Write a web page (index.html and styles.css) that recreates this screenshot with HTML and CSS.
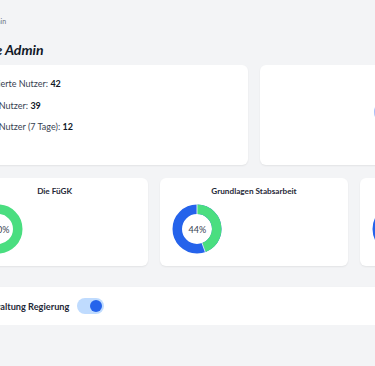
FILE: index.html
```html
<!DOCTYPE html>
<html lang="de">
  <head>
    <meta charset="UTF-8" />
    <meta name="viewport" content="width=device-width, initial-scale=1.0" />
    <title>Admin</title>
    <link rel="stylesheet" href="styles.css">
  </head>
  <body>
    <div class="page">
      <div class="breadcrumb">Home / Admin</div>
      <h1>Seite Admin</h1>

      <div class="row row-two">
        <div class="card stats">
          <p>Registrierte Nutzer: <b>42</b></p>
          <p>Aktive Nutzer: <b>39</b></p>
          <p>Aktive Nutzer (7 Tage): <b>12</b></p>
        </div>
        <div class="card chart-card">
          <svg class="donut big" viewBox="0 0 50 50">
            <circle cx="25" cy="25" r="19.75" class="ring-blue" />
            <circle cx="25" cy="25" r="19.75" class="ring-green"
              stroke-dasharray="61 124.1" transform="rotate(-90 25 25)" />
          </svg>
        </div>
      </div>

      <div class="row row-three">
        <div class="card course">
          <h3>Die FüGK</h3>
          <div class="donut-wrap">
            <svg class="donut" viewBox="0 0 50 50">
              <circle cx="25" cy="25" r="19.75" class="ring-green" />
            </svg>
            <span>100%</span>
          </div>
        </div>
        <div class="card course">
          <h3>Grundlagen Stabsarbeit</h3>
          <div class="donut-wrap">
            <svg class="donut" viewBox="0 0 50 50">
              <circle cx="25" cy="25" r="19.75" class="ring-blue" />
              <circle cx="25" cy="25" r="19.75" class="ring-green"
                stroke-dasharray="54.6 124.1" transform="rotate(-90 25 25)" />
              <line x1="25" y1="0" x2="25" y2="12" class="sep" />
              <line x1="25" y1="25" x2="33.4" y2="48.5" class="sep" />
            </svg>
            <span>44%</span>
          </div>
        </div>
        <div class="card course">
          <h3>Führung im Einsatz</h3>
          <div class="donut-wrap">
            <svg class="donut" viewBox="0 0 50 50">
              <circle cx="25" cy="25" r="19.75" class="ring-blue" />
              <circle cx="25" cy="25" r="19.75" class="ring-green"
                stroke-dasharray="37 124.1" transform="rotate(-90 25 25)" />
            </svg>
            <span>30%</span>
          </div>
        </div>
      </div>

      <div class="card setting">
        <span>Verwaltung Regierung</span>
        <label class="toggle">
          <input type="checkbox" checked />
          <span class="track"><span class="knob"></span></span>
        </label>
      </div>
    </div>
  </body>
</html>
```

FILE: styles.css
```css
body {
  font-family: Lato, "Noto Sans", sans-serif;
  background-color: #f3f4f6;
  color: #1f2937;
  margin: 0;
  padding: 0;
  overflow: hidden;
}
.page {
  width: 586px;
  margin-left: -39px;
  padding-top: 17px;
}
.breadcrumb {
  font-size: 7px;
  color: #6b7280;
  line-height: 9px;
}
h1 {
  font-size: 14px;
  font-style: italic;
  font-weight: 700;
  color: #111827;
  margin: 15px 0 6px 12px;
  line-height: 18px;
}
.row {
  display: grid;
  gap: 12px;
  margin-bottom: 13px;
}
.row-two {
  grid-template-columns: 1fr 1fr;
}
.row-three {
  grid-template-columns: 1fr 1fr 1fr;
  margin-bottom: 21px;
}
.card {
  background: white;
  border-radius: 6px;
  box-shadow: 0 1px 2px rgba(0, 0, 0, 0.07);
}
.stats {
  height: 100px;
  box-sizing: border-box;
  padding: 8px 10px;
}
.stats p {
  font-size: 9px;
  margin: 0;
  line-height: 21.5px;
  color: #374151;
}
.stats b {
  color: #111827;
}
.chart-card {
  height: 100px;
  display: flex;
  justify-content: center;
  align-items: center;
  padding-bottom: 7px;
  box-sizing: border-box;
}
.course {
  height: 88px;
  box-sizing: border-box;
  padding: 7px 12px;
}
.course h3 {
  font-size: 8.2px;
  font-weight: 700;
  text-align: center;
  margin: 0 0 6px;
  line-height: 13px;
  color: #1f2937;
}
.donut-wrap {
  position: relative;
  width: 50px;
  height: 50px;
}
.donut-wrap span {
  position: absolute;
  inset: 0;
  display: flex;
  align-items: center;
  justify-content: center;
  font-size: 9px;
  color: #374151;
}
.donut {
  width: 50px;
  height: 50px;
  display: block;
}
.donut.big {
  width: 60px;
  height: 60px;
}
.donut circle {
  fill: none;
  stroke-width: 9.5;
}
.ring-green {
  stroke: #4ade80;
}
.ring-blue {
  stroke: #2563eb;
}
.sep {
  stroke: white;
  stroke-width: 0.8;
}
.setting {
  height: 38px;
  border-radius: 0;
  display: flex;
  align-items: center;
  gap: 8px;
  padding: 0 18px;
  font-size: 9.2px;
  font-weight: 700;
  color: #1f2937;
}
.toggle input {
  display: none;
}
.toggle .track {
  display: flex;
  justify-content: flex-end;
  align-items: center;
  width: 27px;
  height: 16px;
  padding: 0 2px;
  box-sizing: border-box;
  border-radius: 8px;
  background: #bfdbfe;
}
.toggle .knob {
  width: 12px;
  height: 12px;
  border-radius: 50%;
  background: #2563eb;
}
```
